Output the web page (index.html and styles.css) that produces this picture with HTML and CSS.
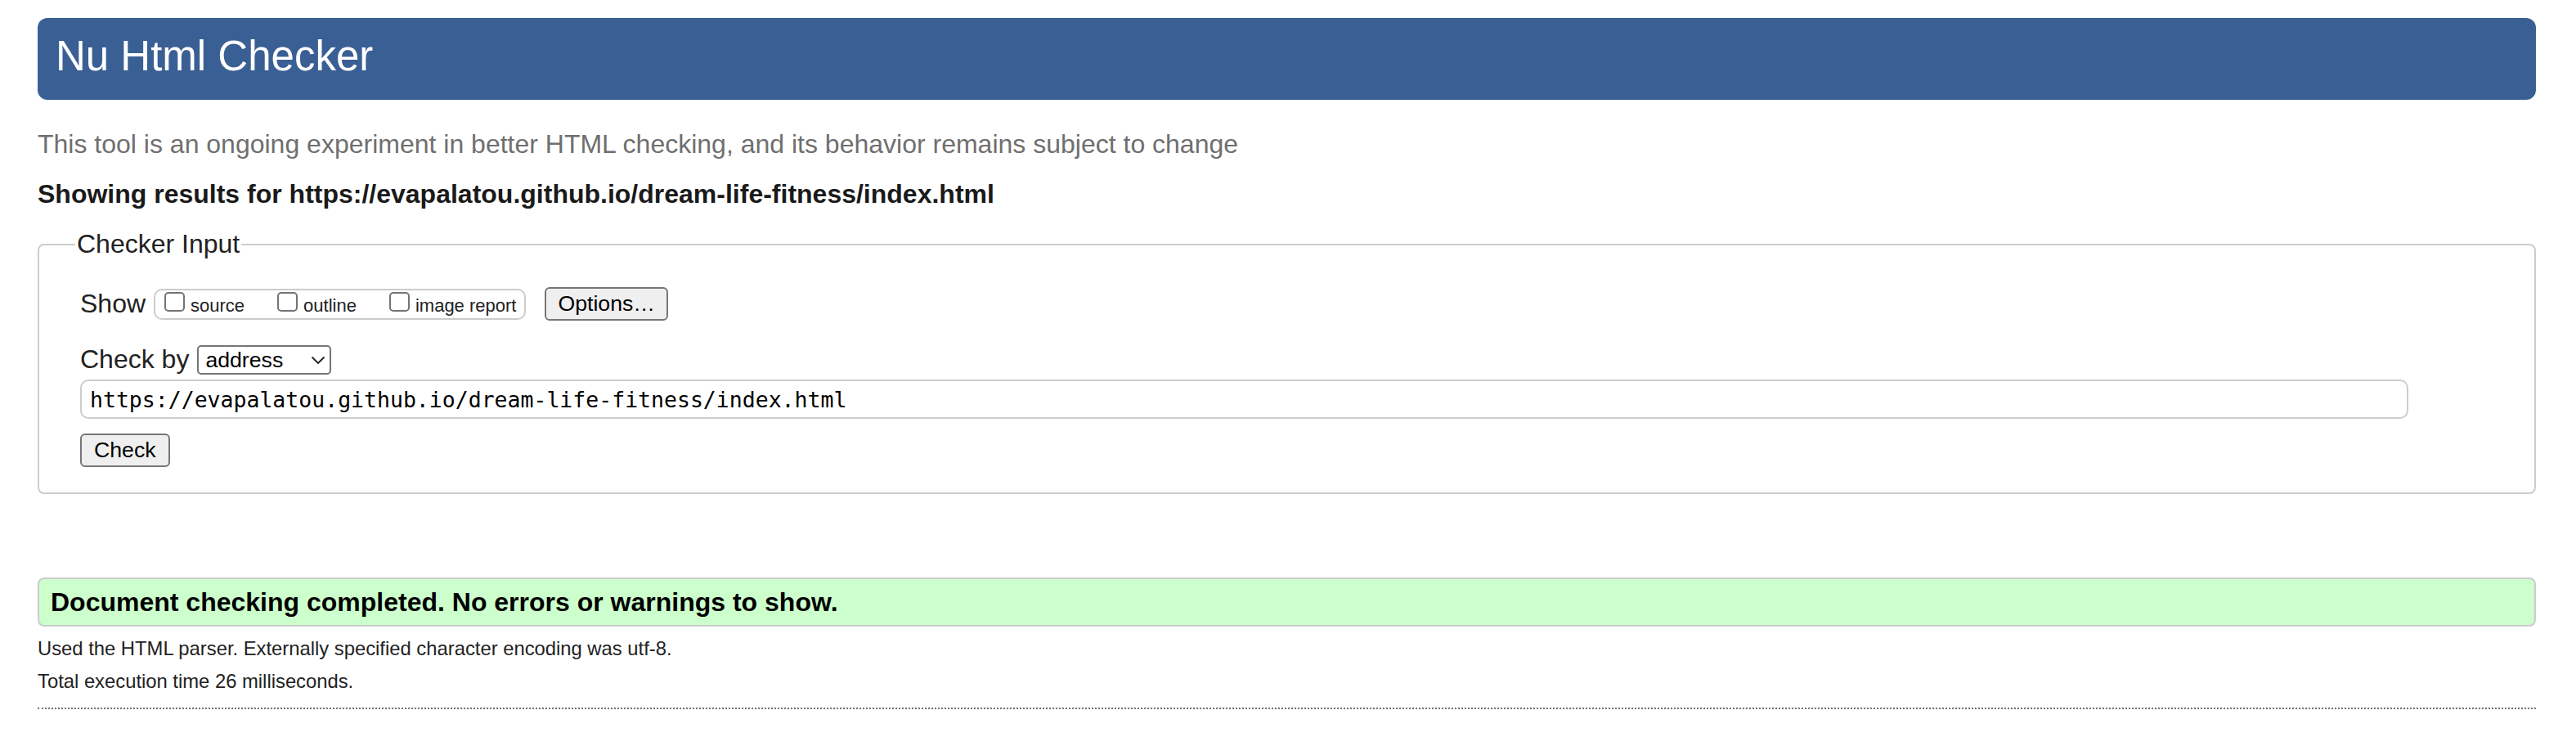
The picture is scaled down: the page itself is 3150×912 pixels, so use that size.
FILE: index.html
```html
<!DOCTYPE html>
<html lang="en">
<head>
<meta charset="utf-8">
<title>Nu Html Checker</title>
<link rel="stylesheet" href="styles.css">
</head>
<body>
<h1 class="title">Nu Html Checker</h1>
<p class="intro">This tool is an ongoing experiment in better HTML checking, and its behavior remains subject to change</p>
<p class="showing">Showing results for https://evapalatou.github.io/dream-life-fitness/index.html</p>
<form class="checker-form">
  <fieldset class="checker">
    <legend class="checker-legend">Checker Input</legend>
    <div class="row row-show">
      <span class="label">Show</span>
      <span class="checks">
        <label class="check-opt"><input type="checkbox"><span>source</span></label>
        <label class="check-opt"><input type="checkbox"><span>outline</span></label>
        <label class="check-opt"><input type="checkbox"><span>image report</span></label>
      </span>
      <button type="button" class="btn options-btn">Options…</button>
    </div>
    <div class="row row-by">
      <span class="label">Check by</span>
      <span class="select-wrap">
        <select class="select"><option>address</option></select>
        <svg class="chevron" width="16" height="9" viewBox="0 0 16 9" aria-hidden="true"><path d="M1 1 L8 8 L15 1" fill="none" stroke="#222" stroke-width="1.8" stroke-linecap="round" stroke-linejoin="round"/></svg>
      </span>
    </div>
    <input class="url" type="text" value="https://evapalatou.github.io/dream-life-fitness/index.html">
    <button type="button" class="btn check-btn">Check</button>
  </fieldset>
</form>
<p class="result">Document checking completed. No errors or warnings to show.</p>
<p class="stats">Used the HTML parser. Externally specified character encoding was utf-8.</p>
<p class="stats">Total execution time 26 milliseconds.</p>
<hr class="rule">
</body>
</html>
```

FILE: styles.css
```css
html, body {
  background: #fff;
}
body {
  margin: 0;
  padding: 22px 49px 0 46px;
  font-family: "Liberation Sans", Arial, Helvetica, sans-serif;
  color: #222;
}
.title {
  margin: 0;
  height: 100px;
  box-sizing: border-box;
  padding: 0 22px 6px;
  line-height: 94px;
  font-size: 51px;
  font-weight: normal;
  color: #fff;
  background: #3a5f94;
  border-radius: 12px;
}
.intro {
  margin: 36px 0 0;
  font-size: 32px;
  line-height: 37px;
  color: #6f6f6f;
}
.showing {
  margin: 24px 0 0;
  font-size: 32px;
  line-height: 37px;
  font-weight: bold;
  color: #1a1a1a;
}
.checker-form {
  margin: 24px 0 0;
}
.checker {
  margin: 0;
  min-width: 0;
  padding: 0 48px 31px 50px;
  border: 2px solid #ccc;
  border-radius: 8px;
}
.checker-legend {
  font-size: 32px;
  line-height: 37px;
  padding: 0 2px;
  margin-left: -6px;
  color: #222;
}
.row {
  display: flex;
  align-items: center;
}
.row-show {
  margin-top: 34px;
  height: 41px;
}
.label {
  font-size: 32px;
  line-height: 37px;
  color: #222;
}
.checks {
  display: flex;
  align-items: center;
  gap: 40px;
  height: 38px;
  box-sizing: border-box;
  border: 2px solid #ccc;
  border-radius: 10px;
  padding: 0 10px 0 11px;
  margin-left: 10px;
}
.check-opt {
  display: flex;
  align-items: baseline;
  font-size: 22px;
  line-height: 25px;
  color: #222;
}
.check-opt input {
  appearance: none;
  -webkit-appearance: none;
  width: 25px;
  height: 24px;
  margin: 0 7px 0 0;
  box-sizing: border-box;
  border: 2px solid #747474;
  border-radius: 5px;
  background: #fff;
}
.btn {
  height: 41px;
  box-sizing: border-box;
  font-family: "Liberation Sans", Arial, Helvetica, sans-serif;
  font-size: 26.67px;
  color: #000;
  background: #efefef;
  border: 2px solid #767676;
  border-radius: 6px;
}
.options-btn {
  margin-left: 23px;
  padding: 0 14px;
}
.row-by {
  margin-top: 29px;
}
.select-wrap {
  position: relative;
  margin-left: 10px;
  display: flex;
}
.select {
  appearance: none;
  -webkit-appearance: none;
  width: 164px;
  height: 36px;
  box-sizing: border-box;
  padding: 0 0 0 8px;
  font-family: "Liberation Sans", Arial, Helvetica, sans-serif;
  font-size: 26.67px;
  color: #000;
  background: #fff;
  border: 2px solid #767676;
  border-radius: 5px;
}
.chevron {
  position: absolute;
  right: 8px;
  top: 14px;
  pointer-events: none;
}
.url {
  display: block;
  margin: 6px 0 0 0;
  width: calc(100% - 106px);
  height: 48px;
  box-sizing: border-box;
  padding: 0 10px;
  font-family: "DejaVu Sans Mono", "Liberation Mono", monospace;
  font-size: 26.5px;
  color: #000;
  background: #fff;
  border: 2px solid #ccc;
  border-radius: 10px;
}
.check-btn {
  display: block;
  margin-top: 18px;
  padding: 0 15px;
}
.result {
  margin: 102px 0 0;
  height: 60px;
  box-sizing: border-box;
  padding: 0 14px;
  line-height: 57px;
  font-size: 32px;
  font-weight: bold;
  color: #000;
  background: #ccffcc;
  border: 2px solid #ccc;
  border-radius: 8px;
}
.result + .stats {
  margin-top: 7px;
}
.stats {
  margin: 0;
  font-size: 23.8px;
  line-height: 40px;
  color: #222;
}
.rule {
  margin: 12px 0 0;
  height: 0;
  border: 0;
  border-top: 2px dotted #707070;
}
```
